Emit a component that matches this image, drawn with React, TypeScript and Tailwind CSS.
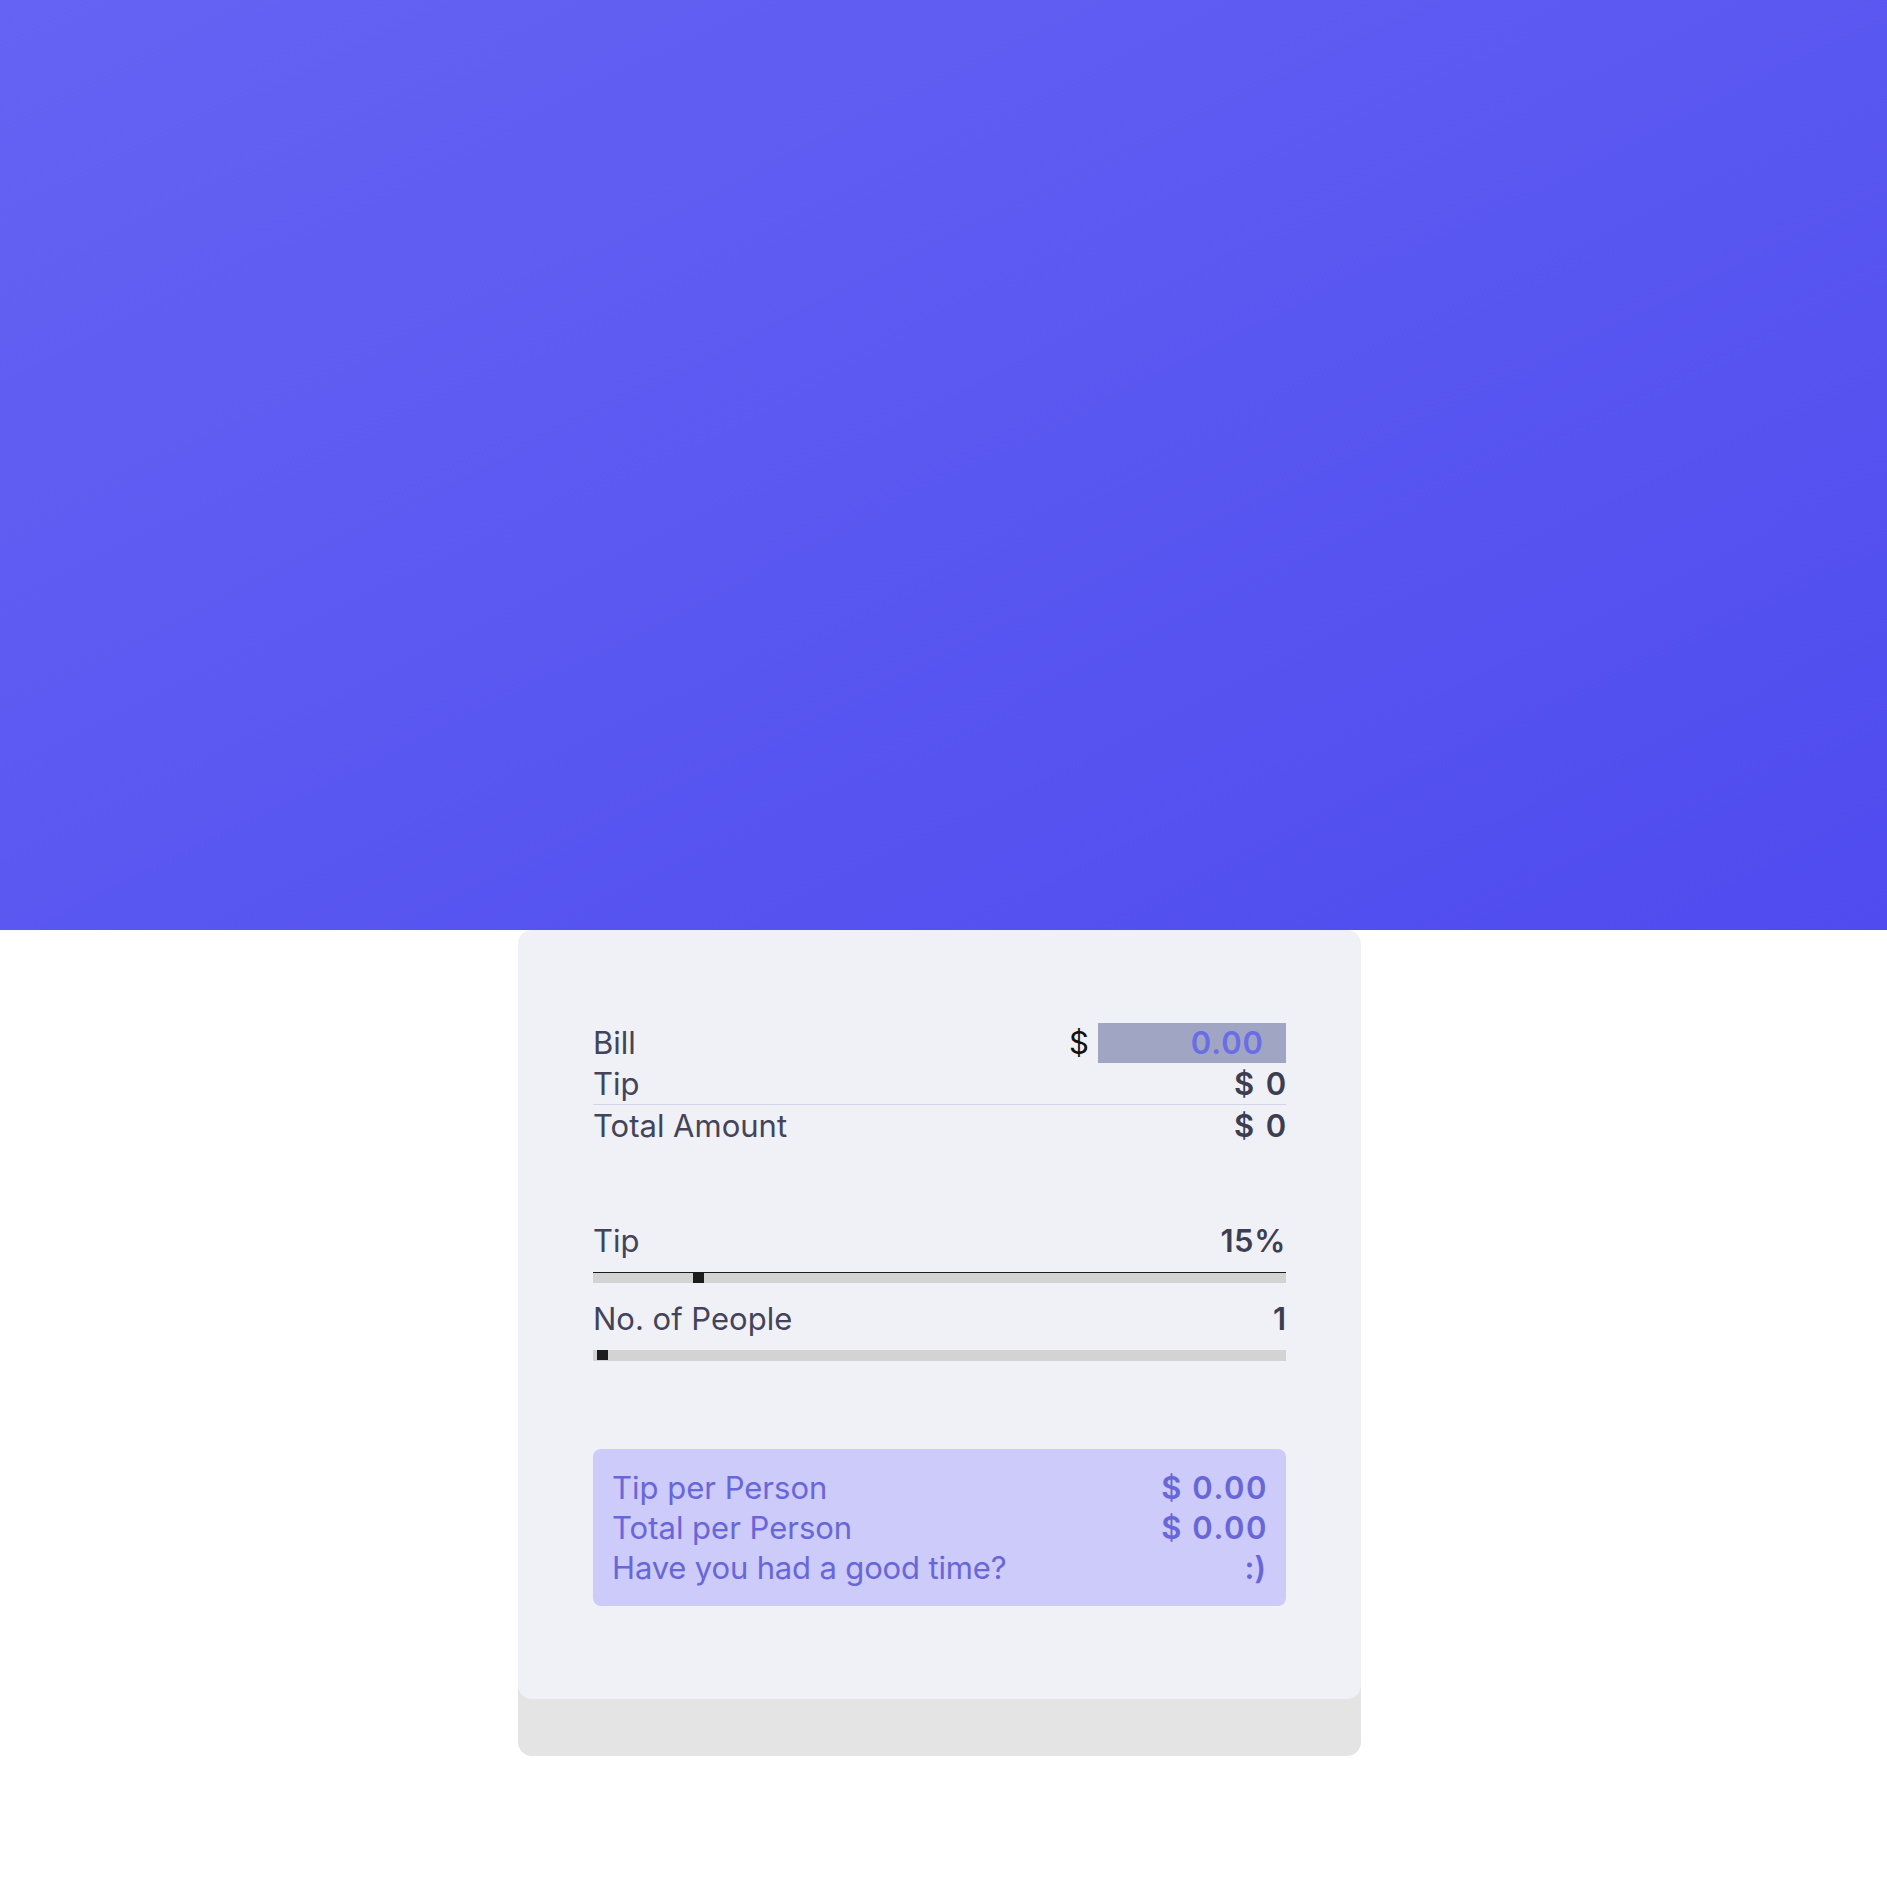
import React from "react";

const font = { fontFamily: "Inter, 'Noto Sans', sans-serif" };

function Slider({ pct, line }: { pct: number; line?: boolean }) {
  return (
    <div className={`relative h-[11px] bg-[#d3d3d3] ${line ? "border-t border-[#1a1a1a]" : ""}`}>
      <div
        className="absolute top-0 w-[11px] h-[10px] bg-[#1c1c1c]"
        style={{ left: `calc(${pct}% + 4px)` }}
      />
    </div>
  );
}

export default function App() {
  return (
    <div className="min-h-[1886px] bg-white" style={font}>
      <div className="h-[930px] bg-gradient-to-br from-[#6563f3] to-[#4f4bef]" />
      <div className="flex justify-center pr-[8px]">
        <div className="w-[843px] rounded-[14px] bg-[#f0f1f6] px-[75px] pt-[92px] pb-[93px] shadow-[0_57px_0_#e4e4e4] text-[31px] text-[#43445a]">
          <div>
            <div className="h-[42px] flex items-center justify-between">
              <span>Bill</span>
              <div className="flex items-center">
                <span className="text-[#111] mr-[9px]">$</span>
                <div className="w-[188px] h-[40px] bg-[#a0a5c4] flex items-center justify-end pr-[22px] font-semibold tracking-[0.03em] text-[#6a6de6]">
                  0.00
                </div>
              </div>
            </div>
            <div className="h-[41px] flex items-center justify-between border-b border-[#d3d3ec]">
              <span>Tip</span>
              <span className="font-semibold tracking-[0.06em] -mr-[2px] text-[#3d3e52]">$ 0</span>
            </div>
            <div className="h-[42px] flex items-center justify-between">
              <span>Total Amount</span>
              <span className="font-semibold tracking-[0.06em] -mr-[2px] text-[#3d3e52]">$ 0</span>
            </div>
          </div>

          <div className="mt-[73px]">
            <div className="h-[42px] flex items-center justify-between">
              <span>Tip</span>
              <span className="font-semibold tracking-[0.02em] text-[#3d3e52]">15%</span>
            </div>
            <div className="mt-[10px]">
              <Slider pct={13.8} line />
            </div>
            <div className="mt-[15px] h-[42px] flex items-center justify-between">
              <span>No. of People</span>
              <span className="font-semibold text-[#3d3e52]">1</span>
            </div>
            <div className="mt-[10px]">
              <Slider pct={0} />
            </div>
          </div>

          <div className="mt-[88px] rounded-[8px] bg-[#cccbfa] pl-[19px] pr-[20px] pt-[19px] pb-[18px] text-[#6966d9]">
            <div className="h-[40px] flex items-center justify-between">
              <span>Tip per Person</span>
              <span className="font-semibold tracking-[0.05em] -mr-[2px]">$ 0.00</span>
            </div>
            <div className="h-[40px] flex items-center justify-between">
              <span>Total per Person</span>
              <span className="font-semibold tracking-[0.05em] -mr-[2px]">$ 0.00</span>
            </div>
            <div className="h-[40px] flex items-center justify-between">
              <span className="tracking-[-0.005em]">Have you had a good time?</span>
              <span className="font-semibold">:)</span>
            </div>
          </div>
        </div>
      </div>
    </div>
  );
}
